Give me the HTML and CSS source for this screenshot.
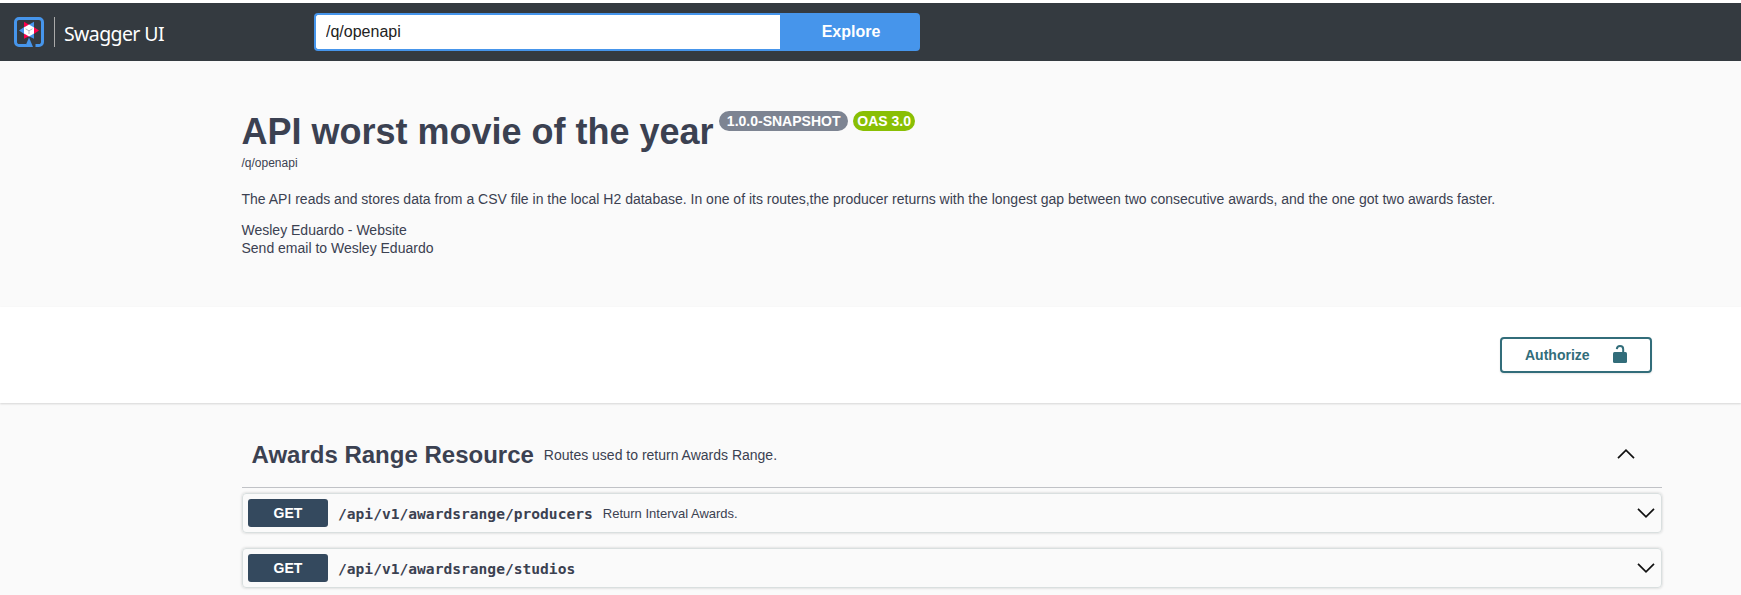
FILE: index.html
```
<!DOCTYPE html>
<html lang="en">
<head>
<meta charset="utf-8">
<title>Swagger UI</title>
<link rel="stylesheet" href="styles.css">
</head>
<body>
<header class="topbar">
  <a class="brand">
    <svg class="logo" width="30" height="30" viewBox="0 0 30 30">
      <path d="M12 28.500H5A3.500 3.500 0 0 1 1.500 25V5A3.500 3.500 0 0 1 5 1.500h20A3.500 3.500 0 0 1 28.500 5v20a3.500 3.500 0 0 1-3.500 3.500h-3.500" fill="none" stroke="#4695eb" stroke-width="3"/>
      <path d="M15 20.500l4 9.500h-8z" fill="#4695eb"/>
      <path d="M10 4.800L15.500 8 10 11.500zM25 13.500L19 17.500v-8zM10 21.800V15.500l5.500 3.500z" fill="#ff004a"/>
      <path d="M20 4.800v6.700L14.500 8zM5 13.500l6-4v8zM20 21.800L14.500 19l5.500-3.500z" fill="#4695eb"/>
      <path d="M15 7.500l5 3v6L15 19.500l-5-3v-6z" fill="#fff"/>
      <path d="M11.500 11.800l3.500 2 3.500-2M15 13.800V17" fill="none" stroke="#a3a7ad" stroke-width=".8"/>
    </svg>
    <span class="divider"></span>
    <span class="brand-name">Swagger UI</span>
  </a>
  <form class="explore">
    <input class="url" type="text" value="/q/openapi">
    <button class="explore-btn" type="button">Explore</button>
  </form>
</header>
<main>
  <section class="info">
    <div class="heading">
      <h1 class="title">API worst movie of the year</h1>
      <span class="badge version">1.0.0-SNAPSHOT</span>
      <span class="badge oas">OAS 3.0</span>
    </div>
    <a class="spec-link">/q/openapi</a>
    <p class="description">The API reads and stores data from a CSV file in the local H2 database. In one of its routes,the producer returns with the longest gap between two consecutive awards, and the one got two awards faster.</p>
    <div class="contact"><a>Wesley Eduardo - Website</a><a>Send email to Wesley Eduardo</a></div>
  </section>
  <section class="schemes">
    <button class="authorize" type="button">
      <span>Authorize</span>
      <svg width="14" height="18" viewBox="0 0 14 18"><path d="M3.800 4.200C4 2 5.200 1 7 1c2 0 3.200 1.200 3.200 3.200V8" fill="none" stroke="#326d7a" stroke-width="2"/><rect y="7" width="14" height="11" rx="1.500" fill="#326d7a"/></svg>
    </button>
  </section>
  <section class="operations">
    <div class="tag">
      <h2 class="tag-name">Awards Range Resource</h2>
      <p class="tag-text">Routes used to return Awards Range.</p>
      <svg class="chevron" width="18" height="10" viewBox="0 0 18 10"><path d="M1 9.200L9 1.200l8 8"/></svg>
    </div>
    <div class="operation">
      <span class="method">GET</span>
      <span class="path">/api/v1/awardsrange/producers</span>
      <span class="summary">Return Interval Awards.</span>
      <svg class="chevron" width="18" height="10" viewBox="0 0 18 10"><path d="M1 .8l8 8 8-8"/></svg>
    </div>
    <div class="operation">
      <span class="method">GET</span>
      <span class="path">/api/v1/awardsrange/studios</span>
      <svg class="chevron" width="18" height="10" viewBox="0 0 18 10"><path d="M1 .8l8 8 8-8"/></svg>
    </div>
  </section>
</main>
</body>
</html>
```
FILE: styles.css
```
* { box-sizing: border-box; }
body {
  margin: 0;
  height: 595px;
  overflow: hidden;
  background: #fafafa;
  color: #3b4151;
  font-family: "Liberation Sans", Arial, sans-serif;
}
h1, h2, p { margin: 0; }
.topbar {
  display: flex;
  height: 61px;
  padding: 10px 0 0 14px;
  background: #343a40;
  border-top: 3px solid #dcdde0;
  border-image: linear-gradient(#fff 0 67%, #d5d6d9 67%) 3 0 0;
}
.brand { display: flex; width: 300px; height: 38px; padding-top: 4px; }
.divider { width: 1px; height: 30px; margin: 0 9px 0 10px; background: #aaa; }
.brand-name { color: #fff; font: 19.500px/34px "Noto Sans", sans-serif; letter-spacing: -.6px; white-space: nowrap; }
.explore { display: flex; width: 606px; height: 38px; }
.url {
  width: 466px;
  padding: 0 10px;
  border: 2px solid #4695eb;
  border-right: 0;
  border-radius: 4px 0 0 4px;
  background: #fff;
  color: #222;
  font: 16px "Liberation Sans", Arial, sans-serif;
  outline: 0;
}
.explore-btn {
  flex: 1;
  padding: 0 0 0 2px;
  border: 0;
  border-radius: 0 4px 4px 0;
  background: #4695eb;
  color: #fff;
  font: bold 16px "Liberation Sans", Arial, sans-serif;
}
.info { height: 246px; padding: 50px 0 0 241.500px; }
.heading { display: flex; height: 42px; white-space: nowrap; }
.title { font-size: 36px; line-height: 41px; }
.badge {
  height: 20px;
  border-radius: 10px;
  color: #fff;
  font-size: 14px;
  font-weight: bold;
  line-height: 20px;
  text-align: center;
}
.version { width: 129px; margin-left: 5.500px; background: #7d8492; }
.oas { width: 62px; margin-left: 5px; background: #89bf04; }
.spec-link { display: block; height: 20px; font-size: 12px; line-height: 20px; }
.description { margin-top: 16px; font-size: 14px; line-height: 20px; white-space: nowrap; }
.contact { display: grid; margin-top: 12px; grid-auto-rows: 18px; font-size: 14px; line-height: 18px; }
.schemes {
  display: flex;
  justify-content: flex-end;
  height: 96px;
  padding: 30px 89px 0 0;
  background: #fff;
  box-shadow: 0 1px 2px rgba(0, 0, 0, .15);
}
.authorize {
  display: flex;
  align-items: center;
  justify-content: space-between;
  width: 152px;
  height: 36px;
  padding: 0 23px;
  border: 2px solid #326d7a;
  border-radius: 4px;
  background: transparent;
  box-shadow: 0 1px 2px rgba(0, 0, 0, .1);
  color: #326d7a;
  font: bold 14px "Liberation Sans", Arial, sans-serif;
}
.authorize svg { margin-top: -2px; }
.operations { width: 1420px; margin-left: 242px; }
.tag {
  display: flex;
  align-items: center;
  height: 85px;
  margin-bottom: 5px;
  padding: 17px 27px 0 9.500px;
  border-bottom: 1px solid rgba(59, 65, 81, .3);
}
.tag-name { padding-top: 2px; font-size: 24px; line-height: 30px; }
.tag-text { padding-top: 2px; margin-left: 10px; font-size: 14px; }
.chevron { margin-left: auto; fill: none; stroke: #111; stroke-width: 1.700; }
.operation {
  display: flex;
  align-items: center;
  height: 40px;
  margin-bottom: 15px;
  padding: 0 6px 0 5px;
  border: 1px solid #d9dfdf;
  border-radius: 4px;
  box-shadow: 0 0 3px rgba(0, 0, 0, .19);
}
.method {
  width: 80px;
  height: 28px;
  border-radius: 3px;
  background: #34495e;
  color: #fff;
  font-size: 14px;
  font-weight: bold;
  line-height: 28px;
  text-align: center;
}
.path { margin-left: 10px; font: bold 14.600px "DejaVu Sans Mono", monospace; }
.summary { margin-left: 10px; font-size: 13px; }
```
